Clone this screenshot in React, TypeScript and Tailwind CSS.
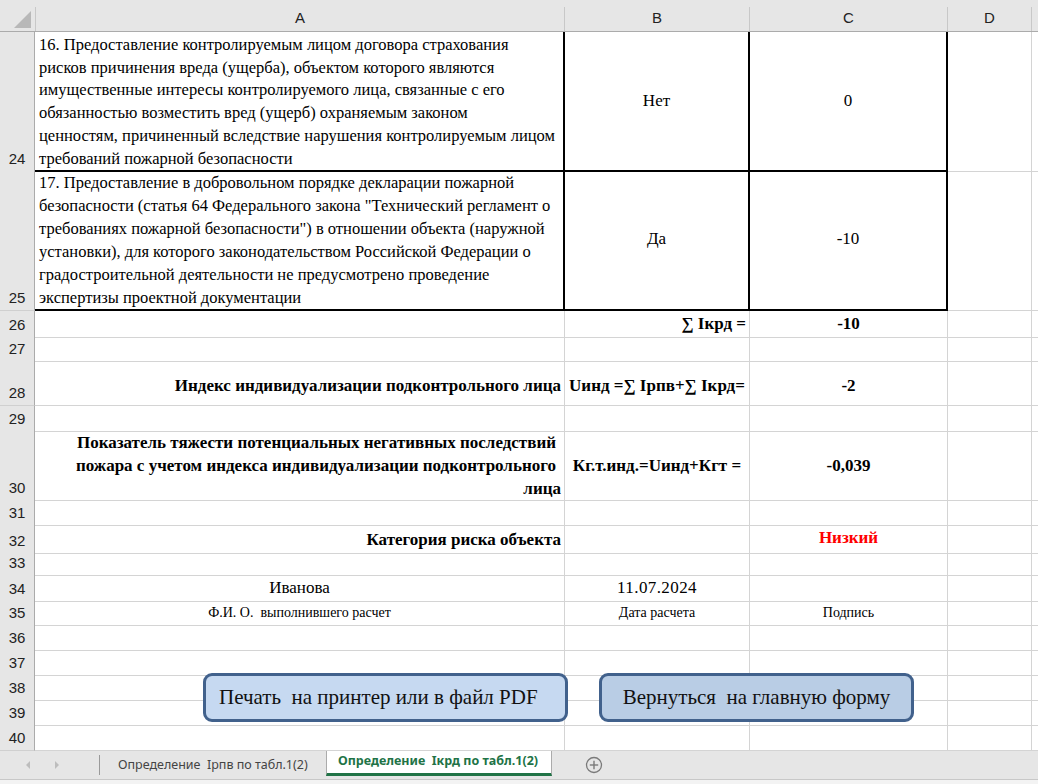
import React from "react";

type CellSpec = {
  content?: React.ReactNode;
  align?: "left" | "center" | "right";
  cls?: string;
};

type RowSpec = {
  n: number;
  h: string;
  a?: CellSpec;
  b?: CellSpec;
  c?: CellSpec;
  thick?: boolean;
};

const alignCls = (a?: "left" | "center" | "right") =>
  a === "right" ? "justify-end text-right" : a === "left" ? "justify-start text-left" : "justify-center text-center";

function Cell({ spec, thick, extra }: { spec?: CellSpec; thick?: boolean; extra?: string }) {
  const border = thick
    ? "border-r-2 border-b-2 border-r-black border-b-black"
    : "border-r border-b border-[#d4d4d4]";
  return (
    <div className={`box-border flex min-w-0 overflow-visible ${border} ${alignCls(spec?.align)} ${spec?.cls ?? "items-center"} ${extra ?? ""}`}>
      {spec?.content}
    </div>
  );
}

const row24Lines = [
  "16. Предоставление контролируемым лицом договора страхования",
  "рисков причинения вреда (ущерба), объектом которого являются",
  "имущественные интересы контролируемого лица, связанные с его",
  "обязанностью возместить вред (ущерб) охраняемым законом",
  "ценностям, причиненный вследствие нарушения контролируемым лицом",
  "требований пожарной безопасности",
];

const row25Lines = [
  "17. Предоставление в добровольном порядке декларации пожарной",
  "безопасности (статья 64 Федерального закона \"Технический регламент о",
  "требованиях пожарной безопасности\") в отношении объекта (наружной",
  "установки), для которого законодательством Российской Федерации о",
  "градостроительной деятельности не предусмотрено проведение",
  "экспертизы проектной документации",
];

const rows: RowSpec[] = [
  {
    n: 24,
    h: "h-[136px]",
    thick: true,
    a: {
      align: "left",
      cls: "items-start pl-[4px] pt-[2px]",
      content: (
        <div className="text-[16.5px] leading-[22.7px] whitespace-nowrap">
          {row24Lines.map((l, i) => (
            <div key={i}>{l}</div>
          ))}
        </div>
      ),
    },
    b: { content: <span className="text-[17px]">Нет</span> },
    c: { content: <span className="text-[17px]">0</span> },
  },
  {
    n: 25,
    h: "h-[143px]",
    thick: true,
    a: {
      align: "left",
      cls: "items-start pl-[4px] pt-[3px]",
      content: (
        <div className="text-[16.5px] leading-[23px] whitespace-nowrap">
          {row25Lines.map((l, i) => (
            <div key={i}>{l}</div>
          ))}
        </div>
      ),
    },
    b: { content: <span className="text-[17px]">Да</span> },
    c: { content: <span className="text-[17px]">-10</span> },
  },
  {
    n: 26,
    h: "h-[25px]",
    b: { align: "right", cls: "items-center pr-[3px]", content: <span className="text-[17px] font-bold whitespace-nowrap">∑ Iкрд =</span> },
    c: { content: <span className="text-[17px] font-bold">-10</span> },
  },
  { n: 27, h: "h-[25px]" },
  {
    n: 28,
    h: "h-[45px]",
    a: { align: "right", cls: "items-center pt-[5px] pr-[3px]", content: <span className="text-[17px] font-bold whitespace-nowrap">Индекс индивидуализации подконтрольного лица</span> },
    b: { cls: "items-center pt-[5px]", content: <span className="text-[17px] font-bold whitespace-nowrap">Uинд =∑ Iрпв+∑ Iкрд=</span> },
    c: { cls: "items-center pt-[5px]", content: <span className="text-[17px] font-bold">-2</span> },
  },
  { n: 29, h: "h-[25px]" },
  {
    n: 30,
    h: "h-[69px]",
    a: {
      align: "right",
      cls: "items-center pr-[3px]",
      content: (
        <div className="text-[17px] font-bold leading-[23px] whitespace-nowrap text-right">
          <div className="pr-[5px]">Показатель тяжести потенциальных негативных последствий</div>
          <div className="pr-[5px]">пожара с учетом индекса индивидуализации подконтрольного</div>
          <div>лица</div>
        </div>
      ),
    },
    b: { content: <span className="text-[17px] font-bold whitespace-nowrap">Кг.т.инд.=Uинд+Кгт =</span> },
    c: { content: <span className="text-[17px] font-bold">-0,039</span> },
  },
  { n: 31, h: "h-[25px]" },
  {
    n: 32,
    h: "h-[25px]",
    a: { align: "right", cls: "items-center pt-[1px] pr-[3px]", content: <span className="text-[17px] font-bold whitespace-nowrap">Категория риска объекта</span> },
    c: { cls: "items-center pb-[2px]", content: <span className="text-[17px] font-bold text-[#ff0000]">Низкий</span> },
  },
  { n: 33, h: "h-[25px]" },
  {
    n: 34,
    h: "h-[25px]",
    a: { content: <span className="text-[17px]">Иванова</span> },
    b: { content: <span className="text-[17px] tracking-[0.4px]">11.07.2024</span> },
  },
  {
    n: 35,
    h: "h-[25px]",
    a: { content: <span className="text-[14px] whitespace-pre">Ф.И. О.  выполнившего расчет</span> },
    b: { content: <span className="text-[14px]">Дата расчета</span> },
    c: { content: <span className="text-[14px]">Подпись</span> },
  },
  { n: 36, h: "h-[25px]" },
  { n: 37, h: "h-[25px]" },
  { n: 38, h: "h-[25px]" },
  { n: 39, h: "h-[25px]" },
  { n: 40, h: "h-[25px]" },
];

const cols = "grid grid-cols-[35px_530px_185px_198px_84px_1fr]";
const sansFont = "[font-family:'Liberation_Sans',Arial,sans-serif]";
const serifFont = "[font-family:'Liberation_Serif','Times_New_Roman',serif]";
const uiFont = "[font-family:'Noto_Sans','Open_Sans',sans-serif]";

function HeaderRow() {
  return (
    <div className={`${cols} h-[32px] bg-[#e6e6e6] border-b border-[#ababab] box-border ${sansFont} text-[15px] text-[#222]`}>
      <div className="flex items-end justify-end pr-[3px] pb-[3px]">
        <svg width="18" height="17" viewBox="0 0 18 17">
          <polygon points="17,0 17,17 0,17" fill="#b8b8b8" />
        </svg>
      </div>
      {["A", "B", "C", "D", ""].map((l, i) => (
        <div key={i} className="pt-[7px] flex flex-col">
          <div className={`flex-1 flex items-center justify-center ${i < 4 ? "border-r border-[#c8c8c8]" : ""} ${i === 0 ? "border-l border-[#c8c8c8]" : ""}`}>
            <span className="pb-[1px]">{l}</span>
          </div>
        </div>
      ))}
    </div>
  );
}

function SheetRow({ r }: { r: RowSpec }) {
  return (
    <div className={`${cols} ${r.h}`}>
      <div className={`box-border flex items-end justify-center bg-[#e6e6e6] border-r border-r-[#ababab] border-b border-b-[#d0d0d0] ${sansFont} text-[15px] text-[#222] leading-[25px]`}>
        {r.n}
      </div>
      <Cell spec={r.a} thick={r.thick} />
      <Cell spec={r.b} thick={r.thick} />
      <Cell spec={r.c} thick={r.thick} />
      <Cell />
      <div className="box-border border-b border-[#d4d4d4]" />
    </div>
  );
}

function TabBar() {
  return (
    <div className={`flex flex-col h-[34px] ${uiFont}`}>
      <div className="h-[30px] box-border border-t border-[#b4b4b4] border-b border-b-[#c8c8c8] bg-[#e6e6e6] flex items-start">
        <div className="w-[99px] h-full flex items-center">
          <svg width="99" height="28" viewBox="0 0 99 28">
            <polygon points="30,10 30,18 26,14" fill="#bdbdbd" />
            <polygon points="55,10 55,18 59,14" fill="#bdbdbd" />
          </svg>
        </div>
        <div className="w-px h-[20px] mt-[4px] bg-[#9a9a9a]" />
        <div className="w-[226px] h-full flex items-center pl-[18px] text-[12.5px] text-[#444] whitespace-pre">
          Определение  Iрпв по табл.1(2)
        </div>
        <div className="-mt-px w-[226px] h-[26px] box-border bg-white border-x border-[#ababab] border-b-[3px] border-b-[#217346] flex items-center pl-[11px] text-[12.5px] font-bold text-[#217346] whitespace-pre">
          Определение  Iкрд по табл.1(2)
        </div>
        <div className="h-full flex items-center pl-[33px]">
          <svg width="18" height="18" viewBox="0 0 18 18">
            <circle cx="9" cy="9" r="7.5" fill="none" stroke="#7a7a7a" strokeWidth="1.3" />
            <line x1="9" y1="4.8" x2="9" y2="13.2" stroke="#7a7a7a" strokeWidth="1.4" />
            <line x1="4.8" y1="9" x2="13.2" y2="9" stroke="#7a7a7a" strokeWidth="1.4" />
          </svg>
        </div>
      </div>
      <div className="flex-1 bg-[#f3f3f3]" />
    </div>
  );
}

export default function App() {
  return (
    <div className="w-[1038px] h-[784px] overflow-hidden bg-white flex flex-col">
      <div className={`relative ${serifFont} text-black`}>
        <HeaderRow />
        {rows.map((r) => (
          <SheetRow key={r.n} r={r} />
        ))}
        <div className="absolute left-[203px] top-[673px] w-[365px] h-[49px] box-border rounded-[9px] border-[3px] border-[#41618c] bg-[#c6d9f1] flex items-center pl-[13px] text-[21px] text-[#111] whitespace-pre">
          Печать  на принтер или в файл PDF
        </div>
        <div className="absolute left-[599px] top-[673px] w-[315px] h-[49px] box-border rounded-[9px] border-[3px] border-[#41618c] bg-[#b9cde5] flex items-center justify-center text-[21px] text-[#111] whitespace-pre">
          Вернуться  на главную форму
        </div>
      </div>
      <TabBar />
    </div>
  );
}
